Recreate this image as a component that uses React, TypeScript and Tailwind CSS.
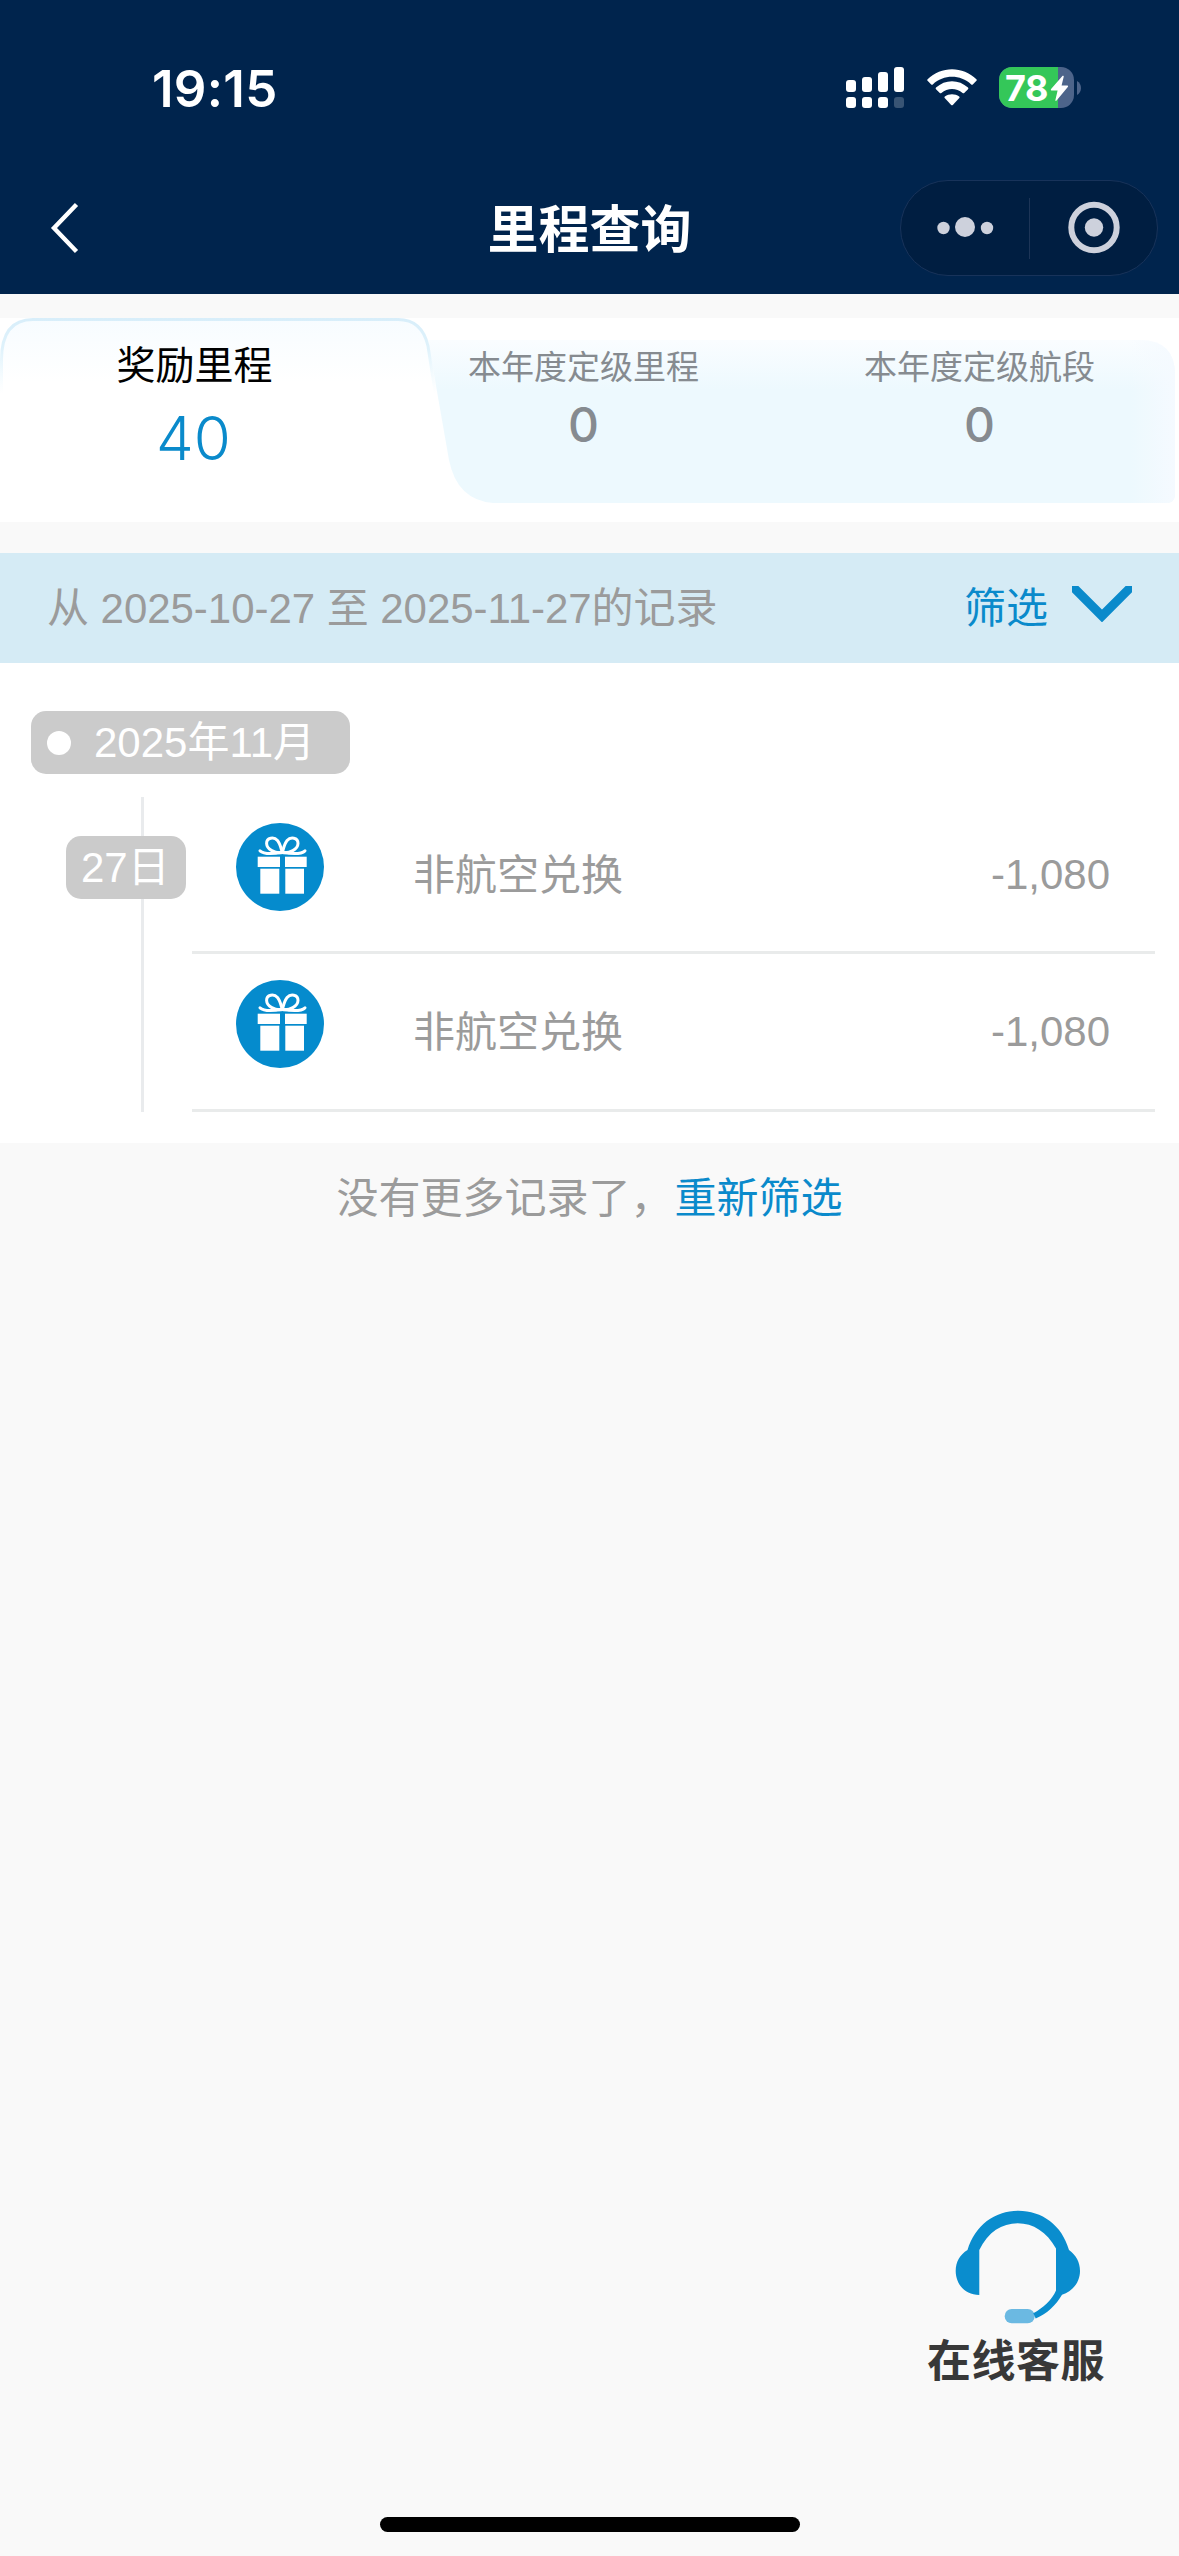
import { ReactNode } from "react";

const records = [
  { id: 1, title: "非航空兑换", amount: "-1,080" },
  { id: 2, title: "非航空兑换", amount: "-1,080" },
];

function SignalIcon() {
  return (
    <svg className="w-[58px] h-[41px]" viewBox="0 0 58 41" fill="#fff">
      <rect x="0" y="13" width="10" height="12" rx="3" />
      <rect x="16" y="10" width="10" height="15" rx="3" />
      <rect x="32" y="5" width="10" height="20" rx="3" />
      <rect x="48" y="0" width="10" height="25" rx="3" />
      <rect x="0" y="30" width="10" height="11" rx="3" />
      <rect x="16" y="30" width="10" height="11" rx="3" />
      <rect x="32" y="30" width="10" height="11" rx="3" />
      <rect x="48" y="30" width="10" height="11" rx="3" opacity="0.22" />
    </svg>
  );
}

function WifiIcon() {
  return (
    <svg className="w-[50px] h-[37px]" viewBox="0 0 50 37" fill="#fff">
      <path d="M0.6 10.2 C14 -3.2 36 -3.2 49.4 10.2 Q50.2 11 49.4 11.8 L45.8 15.4 Q45 16.1 44.2 15.4 C33.5 5.2 16.5 5.2 5.8 15.4 Q5 16.1 4.2 15.4 L0.6 11.8 Q-0.2 11 0.6 10.2 Z" />
      <path d="M9 18.6 C18 10 32 10 41 18.6 Q41.8 19.5 41 20.3 L37.2 24 Q36.4 24.7 35.6 24 C29.5 18.6 20.5 18.6 14.4 24 Q13.6 24.7 12.8 24 L9 20.3 Q8.2 19.5 9 18.6 Z" />
      <path d="M17.7 28.9 Q17 28.1 17.8 27.4 C22 24.5 28 24.5 32.2 27.4 Q33 28.1 32.3 28.9 L25.8 35.9 Q25 36.7 24.2 35.9 Z" />
    </svg>
  );
}

function Battery() {
  return (
    <div className="flex items-center">
      <div className="relative flex items-center w-[75px] h-[41px] rounded-[13px] bg-[#4d648a]">
        <div className="absolute left-0 top-0 w-[59px] h-full rounded-l-[13px] bg-[#34c759]" />
        <span className="relative pl-[6px] text-[36px] leading-[44px] font-bold tracking-[-0.5px] font-['Inter',sans-serif]">
          78
        </span>
        <svg
          className="absolute left-[51px] top-[8px] w-[19px] h-[27px]"
          viewBox="0 0 19 27"
          fill="#fff"
        >
          <path d="M12.6 0.8 Q14 0.2 13.7 1.8 L11.6 10.6 L17.4 10.6 Q18.7 10.8 17.8 12 L6.6 25.6 Q5.2 26.6 5.4 25 L7.6 15.6 L1.4 15.6 Q0.2 15.2 1.1 14 Z" />
        </svg>
      </div>
      <svg className="ml-[3px] w-[4px] h-[14px]" viewBox="0 0 4 14">
        <path d="M0 0 C5.3 2.5 5.3 11.5 0 14 Z" fill="#4d648a" />
      </svg>
    </div>
  );
}

function StatusBar() {
  return (
    <div className="flex justify-between items-start h-[168px] pl-[152px] pr-[98px] pt-[67px]">
      <span className="text-[51px] leading-[43px] font-semibold tracking-[0.3px] font-['Inter',sans-serif]">
        19:15
      </span>
      <div className="flex items-center h-[41px]">
        <SignalIcon />
        <div className="ml-[22.5px]">
          <WifiIcon />
        </div>
        <div className="ml-[22.5px]">
          <Battery />
        </div>
      </div>
    </div>
  );
}

function NavBar() {
  return (
    <div className="grid grid-cols-[258px_1fr_258px] items-center h-[120px] px-[21px]">
      <svg className="ml-[29px] w-[30px] h-[52px]" viewBox="0 0 30 52" fill="none">
        <path d="M26.5 2.5 L4 26 L26.5 49.5" stroke="#fff" strokeWidth="4.4" />
      </svg>
      <h1 className="pt-[5px] text-center text-[51px] leading-[60px] font-bold">
        里程查询
      </h1>
      <div className="flex items-center w-[258px] h-[96px] rounded-full border border-[#18335a] bg-[#001e41]">
        <svg className="w-[128px] h-[94px]" viewBox="0 0 128 94" fill="#cdd1dc">
          <circle cx="42.5" cy="47" r="6.2" />
          <circle cx="64" cy="46" r="10" />
          <circle cx="86" cy="47" r="6.2" />
        </svg>
        <div className="w-px h-[61px] bg-[#1d3557]" />
        <svg className="w-[127px] h-[94px]" viewBox="0 0 127 94">
          <circle cx="64" cy="46.5" r="22.7" fill="none" stroke="#cdd1dc" strokeWidth="6" />
          <circle cx="64" cy="46.5" r="9.2" fill="#cdd1dc" />
        </svg>
      </div>
    </div>
  );
}

// 选中页签的弧形背景
function TabBackground() {
  return (
    <svg
      className="absolute left-0 top-0 w-[1179px] h-[204px]"
      viewBox="0 0 1179 204"
      fill="none"
    >
      <defs>
        <linearGradient id="pane" x1="0" y1="22" x2="0" y2="72" gradientUnits="userSpaceOnUse">
          <stop offset="0" stopColor="#fafdff" />
          <stop offset="1" stopColor="#edf9fe" />
        </linearGradient>
        <linearGradient id="paneRight" x1="1130" y1="0" x2="1176" y2="0" gradientUnits="userSpaceOnUse">
          <stop offset="0" stopColor="#f5faff" stopOpacity="0" />
          <stop offset="1" stopColor="#f5faff" />
        </linearGradient>
        <linearGradient id="active" x1="0" y1="0" x2="0" y2="64" gradientUnits="userSpaceOnUse">
          <stop offset="0" stopColor="#f7fcff" />
          <stop offset="1" stopColor="#ffffff" />
        </linearGradient>
        <linearGradient id="edge" x1="0" y1="0" x2="0" y2="76" gradientUnits="userSpaceOnUse">
          <stop offset="0" stopColor="#d8eefa" />
          <stop offset="0.4" stopColor="#dff2fb" />
          <stop offset="1" stopColor="#eaf8fe" stopOpacity="0" />
        </linearGradient>
      </defs>
      <path
        d="M428 22 H1140 Q1175 22 1175 57 V176 Q1175 185 1166 185 H493 Q457 182 449 142 Z"
        fill="url(#pane)"
      />
      <path d="M1130 22 H1140 Q1175 22 1175 57 V176 Q1175 185 1166 185 H1130 Z" fill="url(#paneRight)" />
      <path
        d="M1.5 80 V42 Q1.5 1.5 33 1.5 H398 Q422 1.5 428 28 L436 80 Z"
        fill="url(#active)"
      />
      <path
        d="M1.5 80 V42 Q1.5 1.5 33 1.5 H398 Q422 1.5 428 28 L436 80"
        stroke="url(#edge)"
        strokeWidth="3"
      />
    </svg>
  );
}

function MileageTabs() {
  return (
    <section className="relative mt-6 h-[204px] bg-white font-['Inter','Noto_Sans_CJK_SC',sans-serif]">
      <TabBackground />
      <div className="relative grid grid-cols-[389px_389px_401px] h-full text-center">
        <div className="flex flex-col">
          <span className="mt-[22px] text-[39px] leading-[50px] text-black">奖励里程</span>
          <span className="mt-[13px] pr-[2px] text-[60px] leading-[70px] font-light text-[#0a8acb]">
            40
          </span>
        </div>
        <div className="flex flex-col text-[#868b90]">
          <span className="mt-[29px] text-[33px] leading-[40px]">本年度定级里程</span>
          <span className="mt-[10px] text-[48px] leading-[56px] font-medium">0</span>
        </div>
        <div className="flex flex-col pl-[2px] text-[#868b90]">
          <span className="mt-[29px] text-[33px] leading-[40px]">本年度定级航段</span>
          <span className="mt-[10px] text-[48px] leading-[56px] font-medium">0</span>
        </div>
      </div>
    </section>
  );
}

function FilterBar() {
  return (
    <div className="flex items-center mt-[31px] h-[110px] pt-px pl-[47px] pr-[47px] bg-[#d5ebf5] text-[42px] leading-[60px]">
      <span className="flex-1 tracking-[-0.04px] text-[#9b9b9b]">
        从 2025-10-27 至 2025-11-27的记录
      </span>
      <span className="text-[#0a8acb]">筛选</span>
      <svg
        className="ml-[24px] mb-[9px] w-[60px] h-[36px]"
        viewBox="0 0 60 36"
        fill="none"
      >
        <path d="M-1 -1 L30 30 L61 -1" stroke="#0a8acb" strokeWidth="9" />
      </svg>
    </div>
  );
}

function Tag({ className, children }: { className: string; children: ReactNode }) {
  return (
    <div
      className={`flex items-center h-[63px] rounded-[15px] bg-[#cbcbcb] text-white text-[42px] leading-[63px] ${className}`}
    >
      {children}
    </div>
  );
}

function GiftIcon() {
  return (
    <svg className="w-[88px] h-[88px]" viewBox="0 0 88 88">
      <circle cx="44" cy="44" r="44" fill="#058bcd" />
      <g fill="#fff">
        <rect x="21.7" y="33.7" width="22.3" height="10.3" />
        <rect x="49" y="33.7" width="21.7" height="10.3" />
        <rect x="24.3" y="45.7" width="19" height="25" />
        <rect x="49.3" y="45.7" width="18.7" height="25" />
      </g>
      <g fill="none" stroke="#fff" strokeWidth="3" strokeLinecap="round">
        <path d="M46.3 29.5 C39 30.5 30.8 26.5 30.6 20.5 C30.5 14.5 38 13.5 41.5 17.5 C44.4 21 45 25.5 46.3 29.5 Z" />
        <path d="M46.3 29.5 C53.6 30.5 61.8 26.5 62 20.5 C62.1 14.5 54.6 13.5 51.1 17.5 C48.2 21 47.6 25.5 46.3 29.5 Z" />
        <path d="M24 27.8 C28 31.5 38 30.8 46.3 29.3 C54.6 30.8 65 31.5 69 27.8" />
      </g>
    </svg>
  );
}

function RecordList() {
  return (
    <section className="h-[480px] pt-[48px] bg-white">
      <Tag className="ml-[31px] w-[319px] pl-[16px]">
        <span className="w-[24px] h-[24px] rounded-full bg-white" />
        <span className="ml-[23px]">2025年11月</span>
      </Tag>
      <div className="relative flex mt-[23px] h-[315px]">
        <div className="absolute left-[141px] top-0 w-[3px] h-full bg-[#e9ebed]" />
        <div className="relative w-[192px] pl-[66px] pt-[39px]">
          <Tag className="w-[120px] pl-[15px]">27日</Tag>
        </div>
        <ul className="w-[963px]">
          {records.map((r) => (
            <li
              key={r.id}
              className="flex items-start h-[157px] last:h-[158px] border-b-[3px] border-[#e9ebeb] pl-[44px] pr-[45px] text-[42px] leading-[60px] text-[#9b9b9b]"
            >
              <div className="pt-[26px]">
                <GiftIcon />
              </div>
              <span className="flex-1 ml-[89px] mt-[49px]">{r.title}</span>
              <span className="mt-[48px]">{r.amount}</span>
            </li>
          ))}
        </ul>
      </div>
    </section>
  );
}

function ServiceButton() {
  return (
    <div className="absolute left-[918px] top-[2210px] flex flex-col items-center w-[196px]">
      <svg className="ml-[4px] w-[126px] h-[114px]" viewBox="0 0 126 114">
        <rect x="49.7" y="99" width="30" height="14.3" rx="7" fill="#6bb9e2" />
        <path
          d="M24.3 85 C10 85 0.7 74 0.7 61 C0.7 52 5 44.5 12.5 40 C20 15 40 0.7 63.3 0.7 C87 0.7 107 15 114 40 C121 45 125 52 125 61 C125 72 118 81 107 84.8 C101 95 92 104 80.7 108.5 L78.3 103.3 C88 98 97 90 101 80.5 V38.5 C92 22 78 13.3 62.7 13.3 C47 13.3 33 22 24.3 40 Z"
          fill="#0a8dce"
        />
      </svg>
      <span className="mt-[8px] text-[44px] leading-[60px] font-bold tracking-[0.5px] text-[#383838]">
        在线客服
      </span>
    </div>
  );
}

export default function App() {
  return (
    <div className="relative w-[1179px] h-[2556px] overflow-hidden bg-[#f9f9f9] font-['Liberation_Sans','Noto_Sans_CJK_SC',sans-serif]">
      <header className="h-[294px] bg-[#00244d] text-white">
        <StatusBar />
        <NavBar />
      </header>
      <MileageTabs />
      <FilterBar />
      <RecordList />
      <p className="pt-[26px] text-center text-[42px] leading-[60px] text-[#9b9b9b]">
        没有更多记录了，<span className="ml-[2px] text-[#0a8acb]">重新筛选</span>
      </p>
      <ServiceButton />
      <div className="absolute left-[380px] bottom-[24px] w-[420px] h-[15px] rounded-full bg-black" />
    </div>
  );
}
